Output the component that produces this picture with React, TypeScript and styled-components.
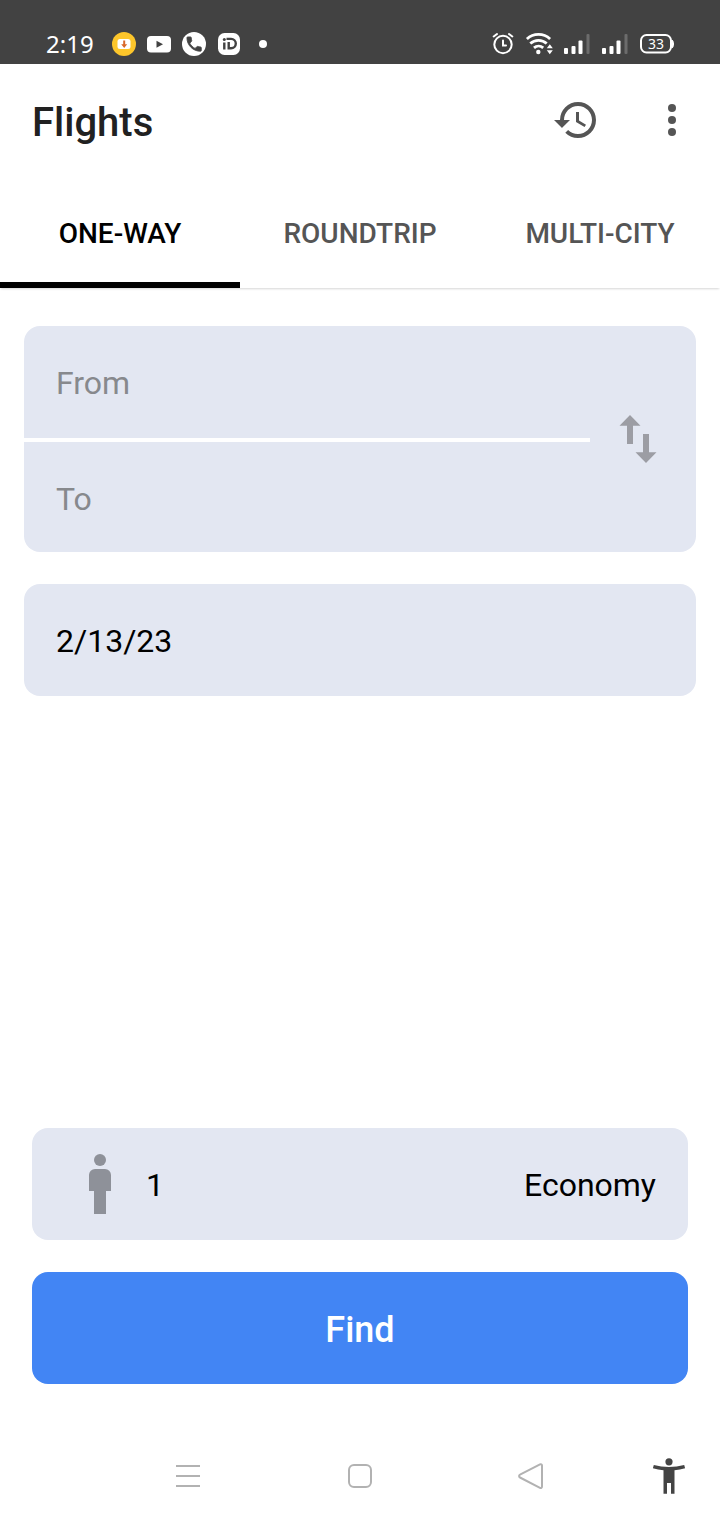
import React, { useState } from "react";
import styled, { createGlobalStyle } from "styled-components";

const GlobalStyle = createGlobalStyle`
  * { box-sizing: border-box; }
  body { margin: 0; background: #fff; font-family: Roboto, "Noto Sans", sans-serif; }
  button, input { font: inherit; color: inherit; border: 0; margin: 0; padding: 0; background: none; }
  button { cursor: pointer; }
  svg { display: block; flex: none; }
`;

const Screen = styled.div`
  display: flex;
  flex-direction: column;
  min-height: 100vh;
  background: #fff;
  color: #000;
`;

const StatusBar = styled.div`
  display: flex;
  justify-content: space-between;
  height: 64px;
  padding: 24px 46px 0;
  background: #424242;
  color: #fff;
`;

const StatusGroup = styled.div<{ $gap: number }>`
  display: flex;
  align-items: center;
  gap: ${(p) => p.$gap}px;
  height: 40px;
`;

const Clock = styled.span`
  width: 55px;
  font: 24px/40px "Noto Sans", sans-serif;
`;

const Dot = styled.span`
  width: 8px;
  height: 8px;
  margin-left: 7px;
  border-radius: 50%;
  background: #fff;
`;

const AppBar = styled.header`
  display: flex;
  align-items: center;
  height: 112px;
  padding: 0 24px 0 32px;
`;

const Title = styled.h1`
  flex: 1;
  margin: 0;
  padding-top: 6px;
  font-size: 40px;
  line-height: 48px;
  font-weight: 500;
  color: #212121;
`;

const IconButton = styled.button`
  display: flex;
  align-items: center;
  justify-content: center;
  width: 48px;
  height: 48px;
  color: #555;
`;

const BarActions = styled.div`
  display: flex;
  gap: 48px;
`;

const Tabs = styled.div`
  display: grid;
  grid-template-columns: repeat(3, 1fr);
  height: 112px;
  box-shadow: 0 2px 2px -1px rgba(0, 0, 0, 0.16);
`;

const Tab = styled.button<{ $active: boolean }>`
  padding-top: 10px;
  border-bottom: 6px solid ${(p) => (p.$active ? "#000" : "transparent")};
  font-size: 28px;
  line-height: 32px;
  font-weight: 500;
  color: ${(p) => (p.$active ? "#000" : "#555")};
`;

const Form = styled.form`
  display: flex;
  flex: 1;
  flex-direction: column;
  gap: 32px;
  padding: 38px 24px 48px;
`;

const Panel = styled.div`
  display: flex;
  align-items: center;
  border-radius: 16px;
  background: #e3e7f2;
  overflow: hidden;
`;

const Places = styled.div`
  flex: 1;
`;

const Field = styled.input`
  display: block;
  width: 100%;
  height: 112px;
  padding: 2px 32px 0;
  font-size: 32px;
  outline: 0;
  &::placeholder { color: #87898d; opacity: 1; }
`;

const Divider = styled.div`
  height: 4px;
  background: #fff;
`;

const ToField = styled(Field)`
  height: 110px;
  padding-top: 4px;
`;

const SwapButton = styled(IconButton)`
  width: 106px;
  padding-right: 10px;
  color: #9c9da4;
`;

const Actions = styled.div`
  display: flex;
  flex-direction: column;
  gap: 32px;
  margin-top: auto;
  padding: 0 8px;
`;

const Choice = styled.button`
  display: flex;
  align-items: center;
  gap: 28px;
  height: 112px;
  padding: 0 32px 0 50px;
  font-size: 32px;
`;

const ChoiceText = styled.span`
  padding-top: 2px;
`;

const CabinChoice = styled(Choice)`
  margin-left: auto;
  padding: 0 32px;
`;

const FindButton = styled.button`
  height: 112px;
  padding-top: 4px;
  border-radius: 16px;
  background: #4285f4;
  color: #fff;
  font-size: 36px;
  font-weight: 500;
`;

const NavBar = styled.nav`
  display: grid;
  grid-template-columns: 1fr auto 1fr;
  align-items: center;
  height: 88px;
`;

const NavKeys = styled.div`
  grid-column: 2;
  display: flex;
  gap: 124px;
`;

const NavButton = styled(IconButton)`
  color: #b2b2b2;
`;

const AccessButton = styled(IconButton)`
  justify-self: end;
  margin-right: 27px;
  color: #444;
`;

const Signal = () => (
  <svg width="26" height="24" viewBox="0 0 26 24" fill="#fff" aria-hidden="true">
    <rect x="0" y="16" width="4" height="6" rx="1" />
    <rect x="7.500" y="14" width="4" height="8" rx="1" />
    <rect x="14.500" y="8.500" width="4" height="13.500" rx="1" />
    <rect x="22.500" y="2" width="3" height="20" rx="1" fill="#6c6c6c" />
  </svg>
);

const Battery = () => (
  <svg width="34" height="20" viewBox="0 0 34 20" aria-label="Battery 33%">
    <rect x="1" y="1" width="30" height="17.500" rx="5.500" fill="none" stroke="#fff" strokeWidth="2" />
    <path d="M32 6c2 1 2 7 0 8z" fill="#fff" stroke="#fff" />
    <text x="16" y="15" textAnchor="middle" fontFamily="Noto Sans, sans-serif" fontSize="14" fill="#fff">33</text>
  </svg>
);

const TABS = ["ONE-WAY", "ROUNDTRIP", "MULTI-CITY"];

export default function App() {
  const [tab, setTab] = useState(0);
  const [from, setFrom] = useState("");
  const [to, setTo] = useState("");
  const [date, setDate] = useState("2/13/23");

  const swap = () => {
    setFrom(to);
    setTo(from);
  };

  return (
    <Screen>
      <GlobalStyle />
      <StatusBar>
        <StatusGroup $gap={11}>
          <Clock>2:19</Clock>
          <svg width="24" height="24" viewBox="0 0 24 24" aria-hidden="true">
            <circle cx="12" cy="12" r="12" fill="#fdc62b" />
            <rect x="5.500" y="7" width="13" height="10" rx="2.500" fill="#fff" />
            <path d="M11.200 8.500h2v3.800h2L12.200 16 9.200 12.300h2z" fill="#d9692b" />
          </svg>
          <svg width="24" height="24" viewBox="0 0 24 24" aria-hidden="true">
            <rect x="0" y="4" width="24" height="16.500" rx="4" fill="#fff" />
            <path d="M9.500 8.700v7l6.500-3.500z" fill="#424242" />
          </svg>
          <svg width="24" height="24" viewBox="0 0 24 24" aria-hidden="true">
            <circle cx="12" cy="12" r="12" fill="#fff" />
            <path transform="translate(2.500 2.500) scale(.8)" fill="#424242" stroke="#424242" d="M6.620 10.790c1.440 2.830 3.760 5.140 6.590 6.590l2.200-2.200c.27-.27.67-.36 1.020-.24 1.120.37 2.330.57 3.570.57.55 0 1 .45 1 1V20c0 .55-.45 1-1 1-9.390 0-17-7.610-17-17 0-.55.45-1 1-1h3.500c.55 0 1 .45 1 1 0 1.250.2 2.450.57 3.570.11.35.03.74-.25 1.020z" />
          </svg>
          <svg width="24" height="24" viewBox="0 0 24 24" fill="none" aria-hidden="true">
            <rect x="1" y="1" width="22" height="22" rx="6.500" fill="#fff" />
            <g stroke="#424242" strokeWidth="2.400">
              <path d="M7.300 10.500V17.500M11.700 10v6.300h2.400a4.700 4.700 0 0 0 0-9.400H9.500" />
            </g>
            <circle cx="7.300" cy="7.500" r="1.500" fill="#424242" />
          </svg>
          <Dot />
        </StatusGroup>
        <StatusGroup $gap={12}>
          <svg width="22" height="24" viewBox="0 0 22 24" fill="none" stroke="#fff" strokeWidth="2" strokeLinecap="round" aria-hidden="true">
            <circle cx="11" cy="12.500" r="8.700" />
            <path d="M11 8.500v5h3M1.700 4.500 5 2M20.300 4.500 17 2" />
          </svg>
          <svg width="26" height="24" viewBox="0 0 26 24" overflow="visible" fill="none" stroke="#fff" strokeWidth="2.800" aria-hidden="true">
            <path d="M.9 7a17 17 0 0 1 23.200 0M4.300 11.600a12 12 0 0 1 16.400 0M8 15.900a7 7 0 0 1 9.200 0" />
            <circle cx="12.300" cy="20" r="2.200" fill="#fff" stroke="none" />
            <path d="M20.800 16.300 23.800 12.300l3 4zM20.800 18.300l3 4 3-4z" fill="#fff" stroke="none" />
          </svg>
          <Signal />
          <Signal />
          <Battery />
        </StatusGroup>
      </StatusBar>

      <AppBar>
        <Title>Flights</Title>
        <BarActions>
          <IconButton aria-label="Search history">
            <svg width="48" height="48" viewBox="0 0 24 24" fill="currentColor">
              <path d="M13 3a9 9 0 0 0-9 9H1l3.890 3.890.07.14L9 12H6c0-3.870 3.130-7 7-7s7 3.130 7 7-3.130 7-7 7c-1.930 0-3.680-.79-4.940-2.060l-1.420 1.420A8.954 8.954 0 0 0 13 21a9 9 0 0 0 0-18zm-1 5v5l4.280 2.540.72-1.210-3.500-2.080V8H12z" />
            </svg>
          </IconButton>
          <IconButton aria-label="More options">
            <svg width="48" height="48" viewBox="0 0 24 24" fill="currentColor">
              <circle cx="12" cy="6" r="2" />
              <circle cx="12" cy="12" r="2" />
              <circle cx="12" cy="18" r="2" />
            </svg>
          </IconButton>
        </BarActions>
      </AppBar>

      <Tabs role="tablist">
        {TABS.map((label, i) => (
          <Tab key={label} role="tab" aria-selected={tab === i} $active={tab === i} onClick={() => setTab(i)}>
            {label}
          </Tab>
        ))}
      </Tabs>

      <Form onSubmit={(e) => e.preventDefault()}>
        <Panel>
          <Places>
            <Field aria-label="From" placeholder="From" value={from} onChange={(e) => setFrom(e.target.value)} />
            <Divider />
            <ToField aria-label="To" placeholder="To" value={to} onChange={(e) => setTo(e.target.value)} />
          </Places>
          <SwapButton type="button" aria-label="Swap origin and destination" onClick={swap}>
            <svg width="48" height="48" viewBox="0 0 48 48" fill="currentColor">
              <path d="M16 0 26.500 10.800H19V29h-6V10.800H5.500zM32 48l10.500-10.800H35V19h-6v18.200h-7.500z" />
            </svg>
          </SwapButton>
        </Panel>
        <Panel>
          <Field aria-label="Departure date" value={date} onChange={(e) => setDate(e.target.value)} />
        </Panel>
        <Actions>
          <Panel>
            <Choice type="button" aria-label="1 passenger">
              <svg width="36" height="60" viewBox="0 0 36 60" fill="#8e9199">
                <circle cx="18" cy="6" r="6" />
                <path d="M13 15h10a6 6 0 0 1 6 6v16h-5v23H12V37H7V21a6 6 0 0 1 6-6z" />
              </svg>
              <ChoiceText>1</ChoiceText>
            </Choice>
            <CabinChoice type="button">
              <ChoiceText>Economy</ChoiceText>
            </CabinChoice>
          </Panel>
          <FindButton type="submit">Find</FindButton>
        </Actions>
      </Form>

      <NavBar>
        <NavKeys>
          <NavButton aria-label="Recent apps">
            <svg width="48" height="48" viewBox="0 0 48 48" stroke="currentColor" strokeWidth="2">
              <path d="M12 14h24M12 24h24M12 34h24" />
            </svg>
          </NavButton>
          <NavButton aria-label="Home">
            <svg width="48" height="48" viewBox="0 0 48 48" fill="none" stroke="currentColor" strokeWidth="2">
              <rect x="13" y="13" width="22" height="22" rx="5" />
            </svg>
          </NavButton>
          <NavButton aria-label="Back">
            <svg width="48" height="48" viewBox="0 0 48 48" fill="none" stroke="currentColor" strokeWidth="2">
              <path d="M32 12.300 12 22.600a1.600 1.600 0 0 0 0 2.900L32 35.900a1.400 1.400 0 0 0 2-1.300V13.500a1.400 1.400 0 0 0-2-1.200z" />
            </svg>
          </NavButton>
        </NavKeys>
        <AccessButton aria-label="Accessibility">
          <svg width="48" height="48" viewBox="0 0 48 48" fill="currentColor">
            <circle cx="24" cy="9.800" r="3.600" />
            <path d="M8.800 13c10 2.600 20.400 2.600 30.400 0l.9 3.300c-3.400 1-7 1.600-10.600 1.900v23.500H26V31h-4v10.700h-3.500V18.200c-3.600-.3-7.200-.9-10.600-1.900z" />
          </svg>
        </AccessButton>
      </NavBar>
    </Screen>
  );
}
